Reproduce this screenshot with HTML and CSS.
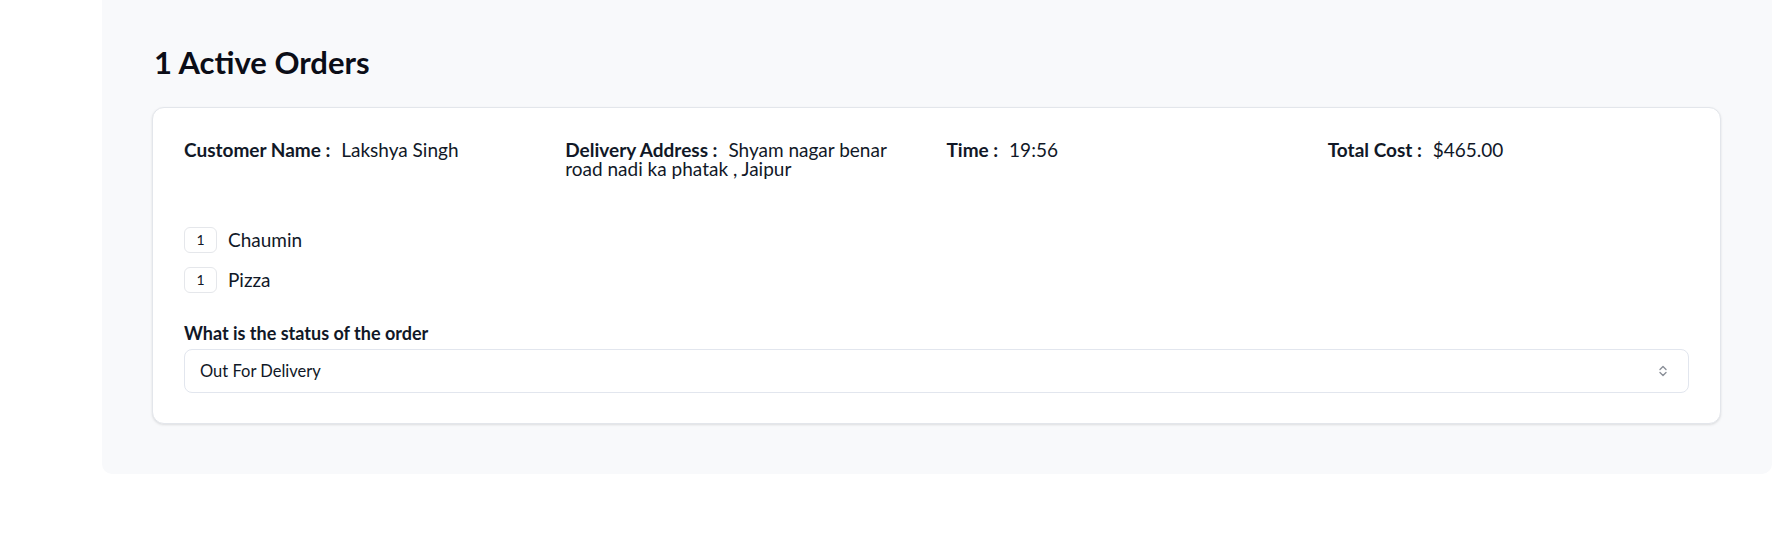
FILE: index.html
```html
<!DOCTYPE html>
<html lang="en">
<head>
<meta charset="utf-8">
<title>Active Orders</title>
<link rel="stylesheet" href="styles.css">
</head>
<body>
<div class="layout">
  <main class="panel">
    <h1 class="title">1 Active Orders</h1>
    <section class="card">
      <div class="info-grid">
        <div class="info"><span class="label">Customer Name :</span> <span class="value">Lakshya Singh</span></div>
        <div class="info"><span class="label">Delivery Address :</span> <span class="value">Shyam nagar benar road nadi ka phatak , Jaipur</span></div>
        <div class="info"><span class="label">Time :</span> <span class="value">19:56</span></div>
        <div class="info"><span class="label">Total Cost :</span> <span class="value">$465.00</span></div>
      </div>
      <ul class="items">
        <li class="item"><span class="qty">1</span><span class="item-name">Chaumin</span></li>
        <li class="item"><span class="qty">1</span><span class="item-name">Pizza</span></li>
      </ul>
      <label class="status-label" for="status">What is the status of the order</label>
      <div class="select-wrap">
        <select id="status" class="select">
          <option>Out For Delivery</option>
        </select>
        <svg class="chevron" width="10" height="14" viewBox="0 0 10 14" fill="none" stroke="#8a8f98" stroke-width="1.4" stroke-linecap="round" stroke-linejoin="round"><path d="M2 5.5 L5 2.5 L8 5.5"/><path d="M2 8.5 L5 11.5 L8 8.5"/></svg>
      </div>
    </section>
  </main>
</div>
</body>
</html>
```
FILE: styles.css
```css
* { box-sizing: border-box; }
html, body { margin: 0; padding: 0; background: #ffffff; }
body {
  font-family: Lato, "Noto Sans", "Liberation Sans", sans-serif;
  color: #111827;
}
.layout {
  display: flex;
  padding: 0 19px 0 102px;
}
.panel {
  flex: 1;
  background: #f8f9fb;
  border-radius: 0 0 10px 10px;
  padding: 44px 51px 50px 50px;
}
.title {
  margin: 0 0 27px 2px;
  font-size: 31px;
  line-height: 36px;
  font-weight: 700;
  color: #0b0d17;
}
.card {
  background: #ffffff;
  border: 1px solid #e3e6eb;
  border-radius: 12px;
  box-shadow: 0 1px 3px rgba(0, 0, 0, 0.08), 0 1px 2px rgba(0, 0, 0, 0.04);
  padding: 32px 31px 30px 31px;
}
.info-grid {
  display: grid;
  grid-template-columns: repeat(4, 1fr);
  column-gap: 20px;
  font-size: 19px;
  line-height: 19px;
}
.label { font-weight: 700; margin-right: 6px; }
.value { font-weight: 400; }
.items {
  list-style: none;
  margin: 49px 0 0 0;
  padding: 0;
  display: flex;
  flex-direction: column;
  gap: 14px;
}
.item {
  display: flex;
  align-items: center;
  gap: 11px;
  font-size: 19px;
  line-height: 26px;
}
.qty {
  width: 33px;
  height: 26px;
  border: 1px solid #e5e7eb;
  border-radius: 6px;
  display: flex;
  align-items: center;
  justify-content: center;
  font-size: 14px;
}
.status-label {
  display: block;
  margin-top: 28px;
  font-size: 18px;
  line-height: 24px;
  font-weight: 700;
}
.select-wrap {
  position: relative;
  margin-top: 4px;
}
.select {
  appearance: none;
  -webkit-appearance: none;
  width: 100%;
  height: 44px;
  border: 1px solid #e2e6ee;
  border-radius: 8px;
  background: #ffffff;
  padding: 0 15px;
  font-family: inherit;
  font-size: 16.5px;
  color: #111827;
}
.chevron {
  position: absolute;
  right: 21px;
  top: 15px;
}
```
